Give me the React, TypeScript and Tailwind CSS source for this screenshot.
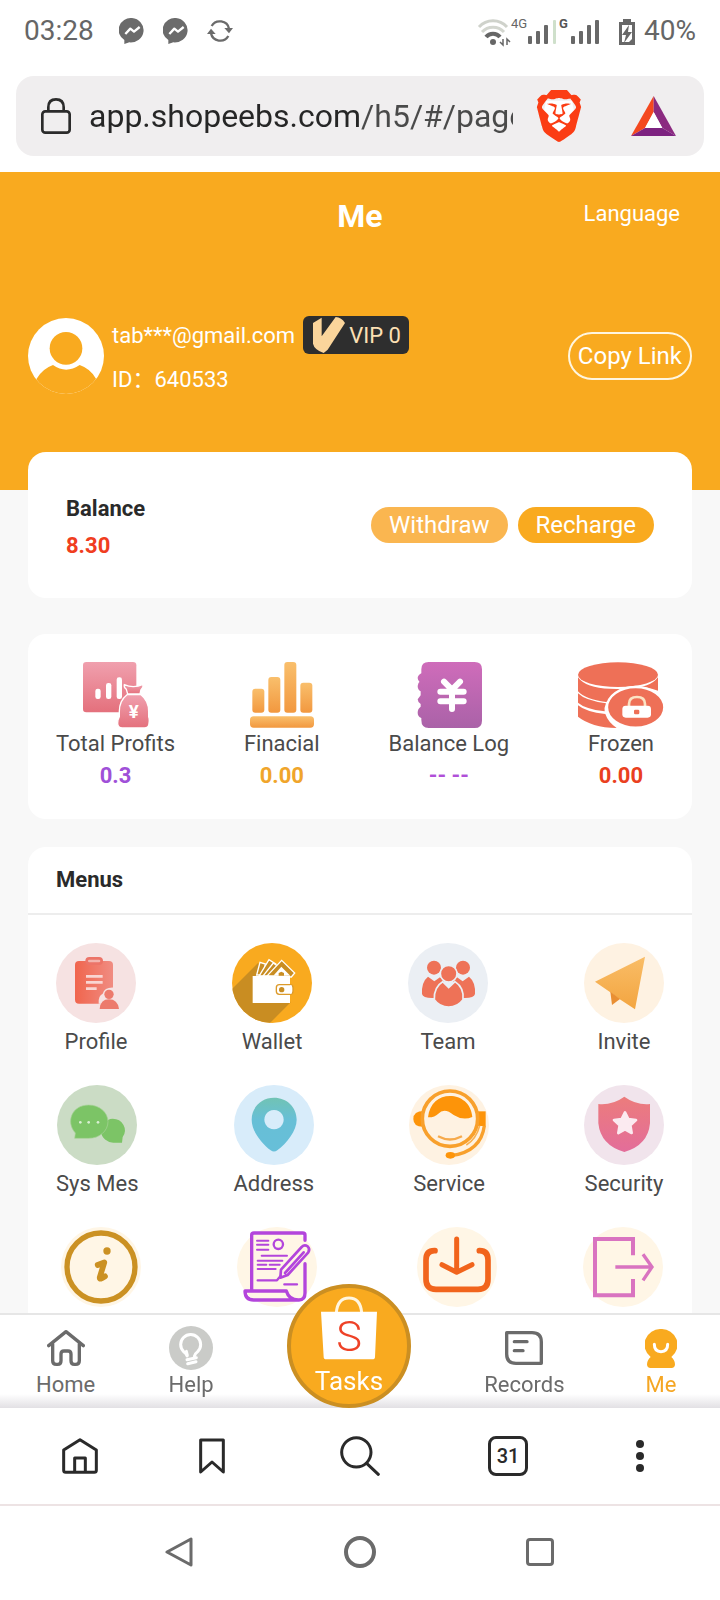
import type { ReactNode } from 'react';
import { SiBrave } from 'react-icons/si';

interface Tile {
  label: string;
  caption?: string;
  width?: string;
  icon: ReactNode;
}

interface Stat {
  label: string;
  value: string;
  color: string;
  icon: ReactNode;
}

function Disc({ fill, children }: { fill: string; children: ReactNode }) {
  return (
    <svg viewBox="0 0 240 240" className="size-20" aria-hidden="true">
      <circle cx="120" cy="120" r="120" fill={fill} />
      {children}
    </svg>
  );
}

function Messenger() {
  return (
    <svg viewBox="0 0 78 78" className="size-[26px]" aria-hidden="true">
      <path d="M39 0a38 36 0 1 1-8 73l-15 5V66A38 36 0 0 1 39 0Z" fill="#6b6b6b" />
      <path d="M19 48l15-16 11 9 17-14" fill="none" stroke="#fff" strokeWidth="7" strokeLinejoin="round" />
    </svg>
  );
}

function Sync() {
  return (
    <svg viewBox="0 0 78 66" className="h-[22px] w-[26px]" aria-hidden="true">
      <g fill="none" stroke="#6b6b6b" strokeWidth="7">
        <path d="M14 18A28 27 0 0 1 66 26" />
        <path d="M64 48A28 27 0 0 1 12 40" />
      </g>
      <path d="M52 24h26L66 40ZM0 42h26L12 26Z" fill="#6b6b6b" />
    </svg>
  );
}

function Connectivity() {
  return (
    <svg viewBox="0 0 158 30" className="h-[30px] w-[158px] overflow-visible" role="img" aria-label="Connectivity">
      <g fill="none" strokeWidth="3">
        <path d="M1 11a19 19 0 0 1 28 0" stroke="#cfd2cb" />
        <path d="M4 16a15 15 0 0 1 22 0" stroke="#d3d6cf" />
        <path d="M8 21a9 9 0 0 1 14 0" stroke="#666" strokeWidth="4" />
      </g>
      <circle cx="15" cy="26" r="3" fill="#666" />
      <path d="M25 23v6l-3-3M29 29v-6l3 3" fill="none" stroke="#666" strokeWidth="1.5" />
      <text x="33" y="12" fontSize="13" fill="#666">4G</text>
      <text x="81" y="12" fontSize="13" fontWeight="700" fill="#555">G</text>
      <g fill="#686868">
        <rect x="50" y="20" width="4" height="8" rx="1" />
        <rect x="58" y="15" width="4" height="13" rx="1" />
        <rect x="66" y="9" width="4" height="19" rx="1" />
        <rect x="75" y="4" width="3" height="24" rx="1" fill="#cfe0cb" />
        <rect x="93" y="20" width="4" height="8" rx="1" />
        <rect x="101" y="15" width="4" height="13" rx="1" />
        <rect x="109" y="9" width="4" height="19" rx="1" />
        <rect x="117" y="4" width="4" height="24" rx="1" />
        <path d="M145 3h8v3h4v23h-16V6h4Z" />
      </g>
      <path d="M144 9h10v14l-3 3h-7Z" fill="#fff" />
      <path d="M151 9l-7 10h4l-2 8 8-11h-4Z" fill="#686868" />
    </svg>
  );
}

function BatTriangle() {
  return (
    <svg viewBox="0 0 135 120" className="h-10 w-[45px]" aria-hidden="true">
      <path d="M68 0L0 120l42-24 26-48Z" fill="#f4481f" />
      <path d="M68 0l67 120-41-24-26-48Z" fill="#8b2a80" />
      <path d="M0 120h135L94 96H42Z" fill="#7d2280" />
      <path d="M68 48L42 96h52Z" fill="#fff" />
    </svg>
  );
}

function ProfitsIcon() {
  return (
    <svg viewBox="0 0 198 198" className="size-[66px]" aria-hidden="true">
      <defs>
        <linearGradient id="profits" x1="0" y1="0" x2="0" y2="1">
          <stop offset="0" stopColor="#f0a0ae" />
          <stop offset="1" stopColor="#e4707c" />
        </linearGradient>
      </defs>
      <rect width="160" height="151" rx="10" fill="url(#profits)" />
      <rect x="37" y="80" width="16" height="31" rx="7" fill="#fff" />
      <rect x="69" y="63" width="16" height="48" rx="7" fill="#fff" />
      <rect x="101" y="46" width="16" height="65" rx="7" fill="#fff" />
      <g fill="url(#profits)" stroke="#fff" strokeWidth="4">
        <path d="M124 68q28 12 56-1 2 10-6 16l-3 13h-37l-4-14q-8-6-6-14Z" />
        <path d="M132 98h42q23 18 23 50v16q3 8 1 20 0 14-14 14h-66q-14 0-14-14 0-12 5-20v-16q0-32 23-50Z" />
      </g>
      <text x="152" y="168" textAnchor="middle" fontSize="56" fontWeight="700" fill="#fff">¥</text>
    </svg>
  );
}

function FinancialIcon() {
  return (
    <svg viewBox="0 0 192 198" className="h-[66px] w-16" aria-hidden="true">
      <defs>
        <linearGradient id="bars" x1="0" y1="0" x2="0" y2="1">
          <stop offset="0" stopColor="#f9bf6c" />
          <stop offset="1" stopColor="#f2983f" />
        </linearGradient>
      </defs>
      <g fill="url(#bars)">
        <rect x="7" y="80" width="36" height="72" rx="9" />
        <rect x="55" y="45" width="36" height="107" rx="9" />
        <rect x="103" y="0" width="36" height="152" rx="9" />
        <rect x="151" y="62" width="36" height="90" rx="9" />
        <rect x="0" y="163" width="192" height="34" rx="11" />
      </g>
    </svg>
  );
}

function LogIcon() {
  return (
    <svg viewBox="0 0 198 198" className="size-[66px]" aria-hidden="true">
      <defs>
        <linearGradient id="log" x1="0" y1="0" x2="0" y2="1">
          <stop offset="0" stopColor="#cf6cba" />
          <stop offset="1" stopColor="#aa62a8" />
        </linearGradient>
      </defs>
      <path
        d="M38 0h138q22 0 22 22v154q0 22-22 22H38q-22 0-22-24v-6q-11-4-11-16t9-18v-8q-9-6-9-14l9-12v-12q-9-4-9-16 0-10 9-16V62q-9-6-9-14 0-8 11-14V22Q16 0 38 0Z"
        fill="url(#log)"
      />
      <path d="M84 59l24 24 24-24M73 89h70M73 118h70M108 81v60" fill="none" stroke="#fff" strokeWidth="18" strokeLinecap="round" />
    </svg>
  );
}

function FrozenIcon() {
  return (
    <svg viewBox="0 0 258 198" className="h-[66px] w-[86px]" aria-hidden="true">
      <g fill="#ee7057">
        <ellipse cx="120" cy="38" rx="120" ry="37" />
        <path d="M0 46q26 36 120 35 94 1 120-35v40q-40-18-90 4-50 24-66 30-62-8-84-32Z" />
        <path d="M0 94q22 22 84 30-6 14-4 24-60-8-80-26Z" />
        <path d="M0 130q24 20 82 26 8 24 34 42Q40 196 0 164Z" />
      </g>
      <ellipse cx="173" cy="136" rx="86" ry="61" fill="#ee7057" stroke="#fff" strokeWidth="7" />
      <path d="M153 134v-8q0-21 24-21t24 21v8" fill="none" stroke="#fbe3c4" strokeWidth="8" />
      <rect x="133" y="131" width="86" height="36" rx="10" fill="#fff" />
      <rect x="168" y="143" width="16" height="14" rx="4" fill="#ee7057" />
    </svg>
  );
}

const stats: Stat[] = [
  { label: 'Total Profits', value: '0.3', color: 'text-[#9f50d8]', icon: <ProfitsIcon /> },
  { label: 'Finacial', value: '0.00', color: 'text-[#f0a52b]', icon: <FinancialIcon /> },
  { label: 'Balance Log', value: '-- --', color: 'text-[#b04fd8]', icon: <LogIcon /> },
  { label: 'Frozen', value: '0.00', color: 'text-[#ea3f20]', icon: <FrozenIcon /> },
];

const profileIcon = (
  <Disc fill="#f6e2e2">
    <defs>
      <linearGradient id="clip">
        <stop offset="0" stopColor="#f0654d" />
        <stop offset="1" stopColor="#f08c82" />
      </linearGradient>
    </defs>
    <rect x="57" y="54" width="114" height="128" rx="12" fill="url(#clip)" />
    <rect x="92" y="46" width="45" height="16" rx="8" fill="#f3b5ae" stroke="#ec7468" strokeWidth="8" />
    <path d="M90 100h50M90 118h50M90 137h32" stroke="#f9d5d2" strokeWidth="8" />
    <path d="M128 182q-2-24 12-30 6-20 34-18v50Z" fill="#f6e2e2" />
    <circle cx="159" cy="154" r="14" fill="#ec7a6c" />
    <path d="M131 198q2-29 28-29t30 29Z" fill="#ec7a6c" />
  </Disc>
);

const walletIcon = (
  <Disc fill="#f9aa1f">
    <clipPath id="walletDisc">
      <circle cx="120" cy="120" r="120" />
    </clipPath>
    <path d="M78 60L0 138v110h106l70-70Z" fill="#c98d22" clipPath="url(#walletDisc)" />
    <g fill="#c98d22" stroke="#fff" strokeWidth="4">
      <path d="M74 96l10-38 16 5-6 33Z" />
      <path d="M82 98l29-48 20 13-28 36Z" />
      <path d="M94 98l30-38 14 10-26 29Z" />
      <path d="M106 98l43-46 39 38-10 12Z" />
    </g>
    <path d="M124 98l24-27 27 27Z" fill="#fff" />
    <path d="M140 98v-8l8-4 8 4v8Z" fill="#c98d22" />
    <rect x="62" y="99" width="112" height="81" fill="#fff" />
    <rect x="133" y="125" width="50" height="29" rx="9" fill="#fff" stroke="#dc9a2a" strokeWidth="4" />
    <path d="M174 127h5v25h-5Z" fill="#fff" />
    <circle cx="149" cy="140" r="8" fill="#c98d22" />
  </Disc>
);

const teamIcon = (
  <Disc fill="#ebeff4">
    <g fill="#ee7257">
      <circle cx="78" cy="74" r="21" />
      <circle cx="165" cy="74" r="21" />
      <path d="M60 101l19 14 17-12 14 10q-28 18-29 52-36 2-39-12-2-36 18-52Z" />
      <path d="M183 101l-19 14-17-12-14 10q28 18 29 52 36 2 39-12 2-36-18-52Z" />
      <g stroke="#ebeff4" strokeWidth="5">
        <circle cx="122" cy="92" r="25" />
        <path d="M104 116l18 18 19-18q28 18 24 54-16 22-43 22t-43-22q-2-38 25-54Z" />
      </g>
    </g>
  </Disc>
);

const inviteIcon = (
  <Disc fill="#fef2e2">
    <defs>
      <linearGradient id="plane" x1="0" y1="0" x2="0" y2="1">
        <stop offset="0" stopColor="#f9bd67" />
        <stop offset="1" stopColor="#f3a540" />
      </linearGradient>
    </defs>
    <path d="M183 41L33 116l48 33 24 18 48 32Z" fill="url(#plane)" />
    <path d="M79 146l5 40 24-18Z" fill="#e98f33" />
  </Disc>
);

const messageIcon = (
  <Disc fill="#cbdcc5">
    <path d="M167 101a37 35 0 0 1 30 55l-2 17h-24a37 36 0 1 1-4-72Z" fill="#7cc466" />
    <path d="M95 60c32 0 58 22 58 50s-26 50-58 50H53l2-16C25 110 45 60 95 60Z" fill="#7cc466" stroke="#a9d39a" strokeWidth="2" />
    <g fill="#d9efd2">
      <circle cx="70" cy="112" r="4" />
      <circle cx="95" cy="112" r="4" />
      <circle cx="123" cy="112" r="4" />
    </g>
  </Disc>
);

const addressIcon = (
  <Disc fill="#d8ecfa">
    <defs>
      <linearGradient id="pin" x1="0" y1="0" x2="0" y2="1">
        <stop offset="0" stopColor="#71c3b4" />
        <stop offset="0.4" stopColor="#67bfd6" />
        <stop offset="1" stopColor="#67bfd9" />
      </linearGradient>
    </defs>
    <path
      d="M120 38c38 0 68 28 68 66 0 34-30 70-58 92q-10 7-20 0C82 174 53 138 53 104c0-38 30-66 67-66Zm0 37a29 29 0 1 0 .1 0Z"
      fill="url(#pin)"
    />
  </Disc>
);

const serviceIcon = (
  <Disc fill="#fef2e2">
    <path d="M44 78q-31 0-31 24t31 23Z" fill="#fd9409" />
    <rect x="206" y="79" width="24" height="44" fill="#fd9409" />
    <circle cx="123" cy="101" r="83" fill="#fef2e2" stroke="#f8a02c" strokeWidth="11" />
    <path d="M57 97C62 54 90 33 123 33s64 22 67 63q-28 12-56-6-28-24-46-4-12 12-31 11Z" fill="#fd9409" />
    <path d="M87 154q36 19 72 0" fill="none" stroke="#f6aa4c" strokeWidth="7" />
    <path d="M226 122q-10 78-100 90" fill="none" stroke="#f8a02c" strokeWidth="10" />
    <path d="M212 122q-10 40-40 58" fill="none" stroke="#f8b050" strokeWidth="5" />
    <ellipse cx="124" cy="211" rx="14" ry="10" fill="#fd9409" />
  </Disc>
);

const securityIcon = (
  <Disc fill="#f1e4ec">
    <defs>
      <linearGradient id="shield" x1="0" y1="0" x2="0" y2="1">
        <stop offset="0" stopColor="#ec7c7c" />
        <stop offset="1" stopColor="#e36d9a" />
      </linearGradient>
    </defs>
    <path d="M121 35q36 26 77 22v58q-6 66-77 86-71-20-78-86V57q42 4 78-22Z" fill="url(#shield)" />
    <path
      d="M123 82l10 20 23 3-17 16 4 23-20-11-20 11 4-23-17-16 23-3Z"
      fill="#fbeaf0"
      stroke="#fbeaf0"
      strokeWidth="8"
      strokeLinejoin="round"
    />
  </Disc>
);

const aboutIcon = (
  <Disc fill="#fff6e6">
    <circle cx="120" cy="120" r="102" fill="none" stroke="#cb9123" strokeWidth="16" />
    <circle cx="138" cy="72" r="11" fill="#cb9123" />
    <path d="M110 114l20-8-14 46q-1 8 16-4" fill="none" stroke="#cb9123" strokeWidth="17" strokeLinejoin="round" strokeLinecap="round" />
  </Disc>
);

const contractIcon = (
  <Disc fill="#fff6e6">
    <g fill="none" stroke="#b345dc" strokeWidth="10" strokeLinecap="round" strokeLinejoin="round">
      <path d="M44 190V24q0-6 7-6h146q7 0 7 6v16M204 110v88q0 21-18 21H50q-26 0-26-27h124q8 27 36 27" />
      <circle cx="124" cy="52" r="14" strokeWidth="7" />
      <path d="M132 128l62-68q8-8 18-2 8 8 2 18l-62 68-22 8ZM144 138l56-62" strokeWidth="8" />
      <path d="M62 160h58l10-12M142 172h38" strokeWidth="7" />
      <path d="M60 41h34M60 53h34M60 68h34M74 86h76M62 101h74M62 113h26M98 113h30M62 126h54" strokeWidth="6" />
    </g>
  </Disc>
);

const downloadIcon = (
  <Disc fill="#fff6e6">
    <g fill="none" stroke="#f1641c" strokeLinecap="round" strokeLinejoin="round">
      <path d="M54 71h-2q-25 0-25 28v58q0 30 30 30h126q30 0 30-30V99q0-28-25-28h-1" strokeWidth="17" />
      <path d="M119 36v98M75 113l44 23 46-23" strokeWidth="15" />
    </g>
  </Disc>
);

const logoutIcon = (
  <Disc fill="#fff6e6">
    <g fill="none" stroke="#d973c0">
      <path d="M150 85V36H36v169h114v-49" strokeWidth="12" />
      <path d="M97 120h108M180 82l27 38-27 40" strokeWidth="10" />
    </g>
  </Disc>
);

const tileRows: Tile[][] = [
  [
    { label: 'Profile', caption: 'Profile', icon: profileIcon },
    { label: 'Wallet', caption: 'Wallet', icon: walletIcon },
    { label: 'Team', caption: 'Team', icon: teamIcon },
    { label: 'Invite', caption: 'Invite', icon: inviteIcon },
  ],
  [
    { label: 'Sys Mes', caption: 'Sys Mes', icon: messageIcon },
    { label: 'Address', caption: 'Address', icon: addressIcon },
    { label: 'Service', caption: 'Service', icon: serviceIcon },
    { label: 'Security', caption: 'Security', icon: securityIcon },
  ],
  [
    { label: 'About', width: 'w-[90px]', icon: aboutIcon },
    { label: 'Contract', width: 'w-[110px]', icon: contractIcon },
    { label: 'Download', width: 'w-[98px]', icon: downloadIcon },
    { label: 'Log out', width: 'w-[82px]', icon: logoutIcon },
  ],
];

function StatusBar() {
  return (
    <div className="flex h-[62px] shrink-0 items-center justify-between px-6 text-[28px] text-[#666]">
      <div className="flex items-center gap-[18px]">
        <span className="mr-[7px]">03:28</span>
        <Messenger />
        <Messenger />
        <Sync />
      </div>
      <div className="flex items-center gap-2">
        <Connectivity />
        <span>40%</span>
      </div>
    </div>
  );
}

function AddressBar() {
  return (
    <div className="shrink-0 px-4 pt-[14px] pb-4">
      <div className="flex h-20 items-center rounded-[18px] bg-[#f0eeef] pr-7 pl-[25px]">
        <svg viewBox="0 0 90 108" className="h-9 w-[30px] shrink-0" aria-hidden="true">
          <rect x="4" y="40" width="82" height="64" rx="9" fill="none" stroke="#2b2b2b" strokeWidth="8" />
          <path d="M22 40V28q0-24 23-24t23 24v12" fill="none" stroke="#2b2b2b" strokeWidth="8" />
        </svg>
        <input
          type="text"
          aria-label="Address"
          defaultValue="app.shopeebs.com/h5/#/pages/user/index"
          className="ml-[18px] min-w-0 flex-1 bg-linear-to-r from-[#262626] from-64% to-[#4a4a4a] to-64% bg-clip-text text-[32px] text-transparent outline-none"
        />
        <button aria-label="Brave Shields" className="relative ml-5 flex shrink-0 items-center">
          <svg viewBox="0 0 24 24" className="absolute inset-0 size-[52px]" aria-hidden="true">
            <path d="M6 5h12l1 5-4 9-3 2-3-2-4-9Z" fill="#fff" />
          </svg>
          <SiBrave className="relative size-[52px] text-[#fb3d14]" />
        </button>
        <button aria-label="Rewards" className="ml-[46px] shrink-0">
          <BatTriangle />
        </button>
      </div>
    </div>
  );
}

function Header() {
  return (
    <header className="bg-[#f9aa1f] px-7 pt-[26px] pb-[94px] text-white">
      <div className="grid grid-cols-[1fr_auto_1fr] items-start">
        <h1 className="col-start-2 text-[32px] leading-9 font-bold">Me</h1>
        <button className="mr-3 justify-self-end text-[22px] leading-8">Language</button>
      </div>
      <div className="mt-[82px] flex items-center">
        <svg viewBox="0 0 228 228" className="size-[76px] shrink-0" aria-hidden="true">
          <clipPath id="avatar">
            <circle cx="114" cy="114" r="114" />
          </clipPath>
          <g clipPath="url(#avatar)">
            <rect width="228" height="228" fill="#fff" />
            <circle cx="114" cy="91" r="49" fill="#f9aa1f" />
            <path d="M0 240l26-58q18-30 49-41 39 28 80 0 32 11 49 41l24 58Z" fill="#f9aa1f" />
          </g>
        </svg>
        <div className="ml-2 flex flex-col gap-2.5 text-[22px]">
          <div className="flex items-center gap-2">
            <span>tab***@gmail.com</span>
            <span className="flex h-[38px] items-center gap-1 rounded-md bg-[#2e2e2e] pr-2 pl-2.5 text-[#fce0b4]">
              <svg viewBox="0 0 96 108" className="h-9 w-8" aria-hidden="true">
                <path d="M0 18L26 2v56L68 0q18 2 28 18L44 98l-12 10Q4 98 0 80Z" fill="#fbd59b" />
              </svg>
              VIP 0
            </span>
          </div>
          <span className="leading-8">ID：640533</span>
        </div>
        <button className="ml-auto h-12 rounded-full border-2 border-[#fff6e0] px-2 text-2xl">Copy Link</button>
      </div>
    </header>
  );
}

function BalanceCard() {
  return (
    <section className="mx-7 -mt-[38px] flex items-center justify-between rounded-[18px] bg-white px-[38px] py-[34px]">
      <div className="pt-1 text-[22px] leading-[37px] font-bold">
        <p className="text-[#2a2a2a]">Balance</p>
        <p className="text-[#f03d20]">8.30</p>
      </div>
      <div className="flex gap-2.5 text-2xl leading-9 text-white">
        <button className="rounded-full bg-[#fab650] px-[18px]">Withdraw</button>
        <button className="rounded-full bg-[#f9aa1f] px-[18px]">Recharge</button>
      </div>
    </section>
  );
}

function StatsCard() {
  return (
    <section className="mx-7 mt-9 flex justify-between rounded-[18px] bg-white px-7 pt-7 pb-[27px] text-[22px] leading-8">
      {stats.map((stat) => (
        <div key={stat.label} className="flex flex-col items-center">
          {stat.icon}
          <span>{stat.label}</span>
          <span className={`font-bold ${stat.color}`}>{stat.value}</span>
        </div>
      ))}
    </section>
  );
}

function MenuCard() {
  return (
    <section className="mx-7 mt-7 rounded-[18px] bg-white">
      <h2 className="border-b-2 border-[#ededed] px-7 py-4 text-[22px] leading-[34px] font-bold text-[#2a2a2a]">Menus</h2>
      <div className="flex flex-col gap-6 p-7">
        {tileRows.map((row) => (
          <div key={row[0].label} className="flex justify-between">
            {row.map((tile) => (
              <button
                key={tile.label}
                aria-label={tile.label}
                className={`flex flex-col items-center text-[22px] leading-[38px] ${tile.width ?? ''}`}
              >
                {tile.icon}
                {tile.caption}
              </button>
            ))}
          </div>
        ))}
      </div>
    </section>
  );
}

function TabBar() {
  return (
    <nav className="relative flex shrink-0 items-start justify-between border-t-2 border-[#e6e6e6] bg-linear-to-b from-white from-85% to-[#e2e0e4] px-9 pt-[11px] text-[22px] leading-[30px] text-[#6b6b6b]">
      <a href="#home" className="flex flex-col items-center">
        <span className="flex h-11 items-center">
          <svg viewBox="0 0 114 108" className="h-9 w-[38px]" aria-hidden="true">
            <g fill="none" stroke="#6b6b6b" strokeWidth="10" strokeLinecap="round" strokeLinejoin="round">
              <path d="M5 47L57 5l52 42" />
              <path d="M17 42v50q0 11 11 11h4q10 0 10-11V72q0-9 9-9h12q9 0 9 9v20q0 11 10 11h4q11 0 11-11V42" />
            </g>
          </svg>
        </span>
        Home
      </a>
      <a href="#help" className="flex flex-col items-center">
        <svg viewBox="0 0 132 132" className="size-11" aria-hidden="true">
          <circle cx="66" cy="66" r="66" fill="#cacbc8" />
          <g fill="none" stroke="#fff" strokeWidth="9" strokeLinecap="round">
            <path d="M54 90q-2-8-10-13a30 30 0 1 1 42 0q-8 6-10 14M52 76l3 12" />
            <path d="M54 101l28-6M56 113l25-6" />
          </g>
        </svg>
        Help
      </a>
      <a
        href="#tasks"
        className="-mt-[42px] flex size-31 flex-col items-center rounded-full border-4 border-[#cb8f22] bg-[#f9aa1f] text-[26px] text-white"
      >
        <svg viewBox="0 0 168 192" className="mt-2 h-16 w-14 overflow-visible" aria-hidden="true">
          <path d="M46 50Q50 6 84 6t38 44" fill="none" stroke="#fff6e0" strokeWidth="9" />
          <path d="M0 47h168l-6 136q0 7-8 7H16q-8 0-8-7Z" fill="#fff" />
          <text x="84" y="164" textAnchor="middle" fontSize="130" fill="#ee4227" fontWeight="300">S</text>
        </svg>
        <span className="mt-1.5">Tasks</span>
      </a>
      <a href="#records" className="flex flex-col items-center">
        <span className="flex h-11 items-center">
          <svg viewBox="0 0 114 102" className="h-[34px] w-[38px]" aria-hidden="true">
            <g fill="none" stroke="#6b6b6b" strokeWidth="10" strokeLinejoin="round" strokeLinecap="round">
              <path d="M5 5h76q28 0 28 28v64H33Q5 97 5 69Z" />
              <path d="M28 32h38M28 59h26" />
            </g>
          </svg>
        </span>
        Records
      </a>
      <a href="#me" className="flex w-[46px] flex-col items-center text-[#f5a623]">
        <span className="flex h-11 items-center">
          <svg viewBox="0 0 96 117" className="h-[39px] w-8" aria-hidden="true">
            <path d="M48 0a48 47 0 0 1 31 84q10 8 11 22 0 11-11 11H17q-11 0-11-11 1-14 11-22A48 47 0 0 1 48 0Z" fill="#f9aa1f" />
            <path d="M28 46q0 22 20 22t20-22" fill="none" stroke="#fff" strokeWidth="9" strokeLinecap="round" />
          </svg>
        </span>
        Me
      </a>
    </nav>
  );
}

function BrowserBar() {
  return (
    <nav className="flex h-[98px] shrink-0 items-center justify-between border-b-2 border-[#ede3e4] bg-white px-[60px]">
      <button aria-label="Home page" className="flex w-10 justify-center">
        <svg viewBox="0 0 108 108" className="size-9" aria-hidden="true">
          <g fill="none" stroke="#2a2a2a" strokeWidth="9" strokeLinejoin="round">
            <path d="M5 36L54 5l49 31v61q0 6-6 6H11q-6 0-6-6Z" />
            <path d="M38 103V60h32v43" />
          </g>
        </svg>
      </button>
      <button aria-label="Bookmarks" className="flex w-10 justify-center">
        <svg viewBox="0 0 78 108" className="h-9 w-[26px]" aria-hidden="true">
          <path d="M5 6h68v96L39 72 5 102Z" fill="none" stroke="#2a2a2a" strokeWidth="9" strokeLinejoin="round" />
        </svg>
      </button>
      <button aria-label="Search" className="flex w-[72px] justify-center">
        <svg viewBox="0 0 120 120" className="size-10" aria-hidden="true">
          <g fill="none" stroke="#2a2a2a" strokeWidth="9" strokeLinecap="round">
            <circle cx="49" cy="49" r="44" />
            <path d="M80 82l35 33" />
          </g>
        </svg>
      </button>
      <button
        aria-label="Tabs"
        className="flex size-10 items-center justify-center rounded-lg border-3 border-[#2a2a2a] text-xl font-medium text-[#2a2a2a]"
      >
        31
      </button>
      <button aria-label="More" className="flex w-10 flex-col items-center gap-1">
        <span className="size-2 rounded-full bg-[#2a2a2a]" />
        <span className="size-2 rounded-full bg-[#2a2a2a]" />
        <span className="size-2 rounded-full bg-[#2a2a2a]" />
      </button>
    </nav>
  );
}

function SystemNav() {
  return (
    <nav className="grid h-[94px] shrink-0 grid-cols-3 place-items-center bg-white px-[90px] pb-0.5">
      <button aria-label="Back">
        <svg viewBox="0 0 90 90" className="size-[30px]" aria-hidden="true">
          <path d="M78 6v78L6 45Z" fill="none" stroke="#6b6b6b" strokeWidth="9" strokeLinejoin="round" />
        </svg>
      </button>
      <button aria-label="Home screen" className="size-8 rounded-full border-4 border-[#6b6b6b]" />
      <button aria-label="Recent apps" className="size-7 rounded-sm border-3 border-[#6b6b6b]" />
    </nav>
  );
}

export default function App() {
  return (
    <div className="flex h-screen flex-col bg-white font-[Roboto,'Noto_Sans_CJK_SC',sans-serif] text-[#4a4a4a]">
      <StatusBar />
      <AddressBar />
      <main className="min-h-0 flex-1 overflow-y-auto bg-[#f8f8f8] [scrollbar-width:none]">
        <Header />
        <BalanceCard />
        <StatsCard />
        <MenuCard />
      </main>
      <TabBar />
      <BrowserBar />
      <SystemNav />
    </div>
  );
}
